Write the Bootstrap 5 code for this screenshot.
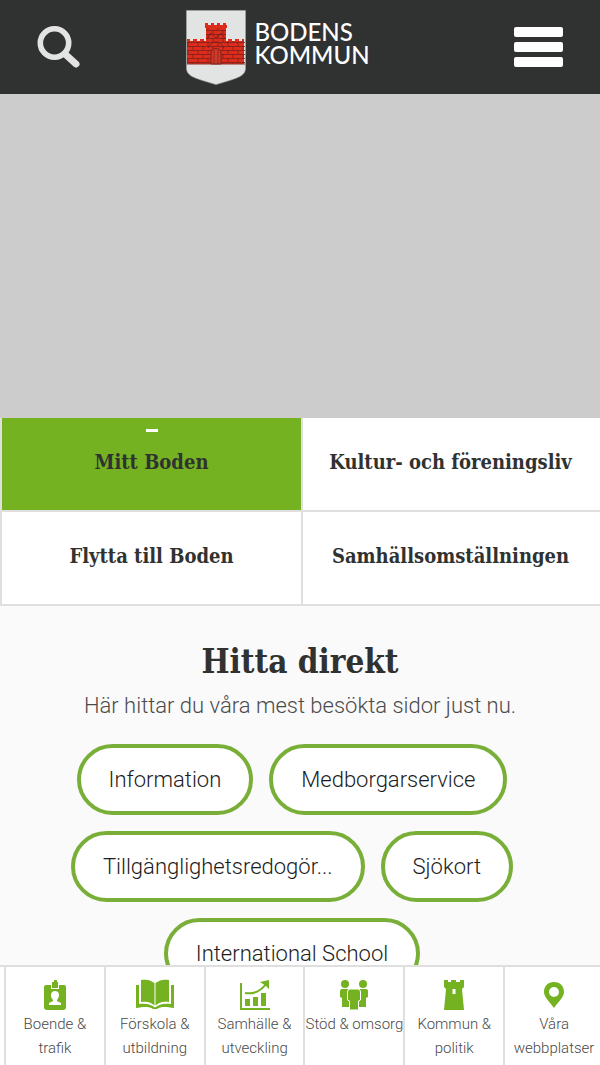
<!DOCTYPE html>
<html lang="sv">
<head>
<meta charset="utf-8">
<meta name="viewport" content="width=device-width, initial-scale=1">
<title>Bodens kommun</title>
<link rel="stylesheet" href="https://cdn.jsdelivr.net/npm/bootstrap@5.3.0/dist/css/bootstrap.min.css">
<style>
:root { --green: #75b222; --dark: #303231; --line: #dfdfdf; }
body { font-family: Roboto, "Open Sans", sans-serif; font-weight: 300; color: #4a4a4a; background: #fafafa; }
a { color: inherit; text-decoration: none; }
.topbar { background: var(--dark); height: 94px; padding: 0 36px; }
.topbar button { border: 0; background: none; padding: 0; }
.brand-link { margin-right: 40px; }
.brand-name { font-family: Lato, sans-serif; font-weight: 500; font-size: 24px; color: #fff; padding-bottom: 8px; }
.brand-name span { display: block; line-height: 23px; height: 23px; }
.content-area { scrollbar-width: none; min-height: 0; }
.hero { height: 324px; background: #ccc; }
.tab-grid { border-left: 2px solid var(--line); }
.tab-link { height: 94px; padding-bottom: 4px; border-bottom: 2px solid var(--line); background: #fff; color: var(--dark); font-family: "DejaVu Serif Condensed", "DejaVu Serif", serif; font-weight: 700; font-size: 20px; line-height: 24px; white-space: nowrap; }
.tab-link.even { box-shadow: inset 2px 0 var(--line); }
.tab-link.current { background: var(--green); }
.tab-link.current::before { content: ""; position: absolute; top: 11px; left: 50%; width: 12px; height: 3px; margin-left: -6px; background: #fff; }
.direct { padding: 34px 16px 24px; }
.direct h2 { font-family: "DejaVu Serif Condensed", "DejaVu Serif", serif; font-weight: 700; font-size: 33px; line-height: 44px; color: var(--dark); margin: 0; }
.direct p { font-size: 22px; line-height: 32px; margin: 6px 0 22px; }
.pill { border: 4px solid #79af38; border-radius: 36px; height: 71px; padding: 0 28px; background: #fff; color: #1c1c1c; font-size: 22px; }
.pills { gap: 16px; padding-right: 16px; }
.bottom-nav { border-top: 2px solid var(--line); background: #fff; padding-left: 4px; margin-right: -3px; }
.bottom-nav a { flex: 1 0 0; min-width: 0; height: 98px; padding-top: 12px; border-left: 2px solid var(--line); font-size: 15px; line-height: 24px; text-align: center; }
.bottom-nav svg { display: block; margin: 0 auto 1px; fill: var(--green); }
.two-line { display: block; margin: 0 8px; }
</style>
</head>
<body>
<div class="vh-100 d-flex flex-column overflow-hidden">
<header class="topbar d-flex align-items-center justify-content-between flex-shrink-0">
  <button type="button" aria-label="Sök"><svg width="46" height="46" viewBox="0 0 46 46" fill="none" stroke="#e3e3e3"><circle cx="18.500" cy="19" r="14.200" stroke-width="5.600"/><path d="M29 30l11 10" stroke-width="7" stroke-linecap="round"/></svg></button>
  <a href="#" class="brand-link d-flex align-items-center gap-2">
    <svg width="60" height="75" viewBox="0 0 60 75">
      <defs><pattern id="brick" width="10" height="8" patternUnits="userSpaceOnUse"><path d="M0 .5h10M0 4.500h10M2 0v4M7 4v4" stroke="#7b211b" stroke-width=".8"/></pattern></defs>
      <path d="M.5.5h59v57c0 8-5 10-29.500 17C5.500 67.500.5 65.500.5 57.500z" fill="#e2e4e3" stroke="#aaa" stroke-width=".6"/>
      <path fill="#dd2c1c" d="M1 29h3v2h3v-2h4v2h3v-2h4v2h2V18h-1v-5h3v2h3v-2h3v2h3v-2h3v2h3v-2h3v2h1v3h-1v13h2v-2h4v2h3v-2h4v2h3v-2h2v25H1z"/>
      <path d="M1 31h19V18h20v13h19v23H1z" fill="url(#brick)"/>
      <path d="M21 29l4-6 5 5 5-5 4 6M22 38c4-8 12-8 16 0" fill="none" stroke="#7b211b"/>
      <path d="M25 54V43c0-6 10-6 10 0v11z" fill="#d13a2b" stroke="#7b211b"/><path d="M28 40v14M32 40v14" stroke="#7b211b" stroke-width=".7"/>
      <path d="M1 54h58" stroke="#8b3028"/>
    </svg>
    <span class="brand-name"><span>BODENS</span><span>KOMMUN</span></span>
  </a>
  <button type="button" aria-label="Meny"><svg width="50" height="40" viewBox="0 0 50 40" fill="#fff"><rect width="49" height="10" rx="2"/><rect y="15" width="49" height="10" rx="2"/><rect y="30" width="49" height="10" rx="2"/></svg></button>
</header>
<main class="content-area flex-grow-1 overflow-auto">
  <div class="hero"></div>
  <nav class="tab-grid row row-cols-2 g-0" aria-label="Områden">
    <a href="#" class="tab-link current position-relative d-flex align-items-center justify-content-center">Mitt Boden</a>
    <a href="#" class="tab-link even d-flex align-items-center justify-content-center">Kultur- och föreningsliv</a>
    <a href="#" class="tab-link d-flex align-items-center justify-content-center">Flytta till Boden</a>
    <a href="#" class="tab-link even d-flex align-items-center justify-content-center">Samhällsomställningen</a>
  </nav>
  <section class="direct text-center">
    <h2>Hitta direkt</h2>
    <p>Här hittar du våra mest besökta sidor just nu.</p>
    <div class="pills d-flex flex-wrap justify-content-center">
      <a href="#" class="pill d-flex align-items-center">Information</a>
      <a href="#" class="pill d-flex align-items-center">Medborgarservice</a>
      <a href="#" class="pill d-flex align-items-center">Tillgänglighetsredogör...</a>
      <a href="#" class="pill d-flex align-items-center">Sjökort</a>
      <a href="#" class="pill d-flex align-items-center">International School</a>
    </div>
  </section>
</main>
<nav class="bottom-nav d-flex flex-shrink-0" aria-label="Huvudmeny">
  <a href="#"><svg width="40" height="32" viewBox="0 0 40 32"><path d="M11 6h5v4h8V6h5q2 0 2 2v20q0 3-3 3H12q-3 0-3-3V8q0-2 2-2z"/><path d="M17 3h2V1h3v2h1v6h-6z"/><path fill="#fff" d="M20 12c5 0 5 6 2 9v1l4 2v2H14v-2l4-2v-1c-3-3-3-9 2-9z"/></svg><span class="two-line">Boende &amp; trafik</span></a>
  <a href="#"><svg width="40" height="32" viewBox="0 0 40 32"><path d="M20.500 4c4-3 8-4 13.500-3v22c-6-1-10 0-13.500 3.500zM19.500 4v22.500C16 23 12 22 6 23V1c5.500-1 9.500 0 13.500 3z"/><path d="M1 6h3v19c7-1 12 0 16 3.500C24 25 29 24 36 25V6h3v23c-7-1-13-2-17 1h-4c-4-3-10-2-17-1z"/></svg><span class="two-line">Förskola &amp; utbildning</span></a>
  <a href="#"><svg width="40" height="32" viewBox="0 0 40 32"><path d="M5 4h2v25h28v2H5zM10 20h5v7h-5zM18 18h5v9h-5zM26 14h5v13h-5z"/><path d="M10 14q13 2 21-9" fill="none" stroke="#75b222" stroke-width="2"/><path d="M25 3l9-2v9l-3-3-3-2z"/></svg><span class="two-line">Samhälle &amp; utveckling</span></a>
  <a href="#" class="text-nowrap"><svg width="40" height="32" viewBox="0 0 40 32"><circle cx="11" cy="5" r="4"/><circle cx="29" cy="5" r="4"/><path d="M8 10h7v18H8v-9l-2-1v-6q0-2 2-2zM25 10h7q2 0 2 2v6l-2 1v9h-7z"/><path stroke="#fff" d="M16 10h8q2.500 0 2.500 3v8l-2 1v9h-9v-9l-2-1v-8q0-3 2.500-3z"/></svg>Stöd &amp; omsorg</a>
  <a href="#"><svg width="40" height="32" viewBox="0 0 40 32"><path fill-rule="evenodd" d="M10 1h4v2h3V1h5v2h4V1h4v7l-2 2 2 21H10l2-21-2-2zM18.500 10v5h3v-5z"/></svg><span class="two-line">Kommun &amp; politik</span></a>
  <a href="#"><svg width="40" height="32" viewBox="0 0 40 32"><path fill-rule="evenodd" d="M20 3c6 0 10 4 10 10 0 5-5 9-10 16C15 22 10 18 10 13 10 7 14 3 20 3zm0 5a5 5 0 1 0 0 10 5 5 0 0 0 0-10z"/></svg><span class="two-line">Våra webbplatser</span></a>
</nav>
</div>
<script src="https://cdn.jsdelivr.net/npm/bootstrap@5.3.0/dist/js/bootstrap.bundle.min.js"></script>
</body>
</html>
